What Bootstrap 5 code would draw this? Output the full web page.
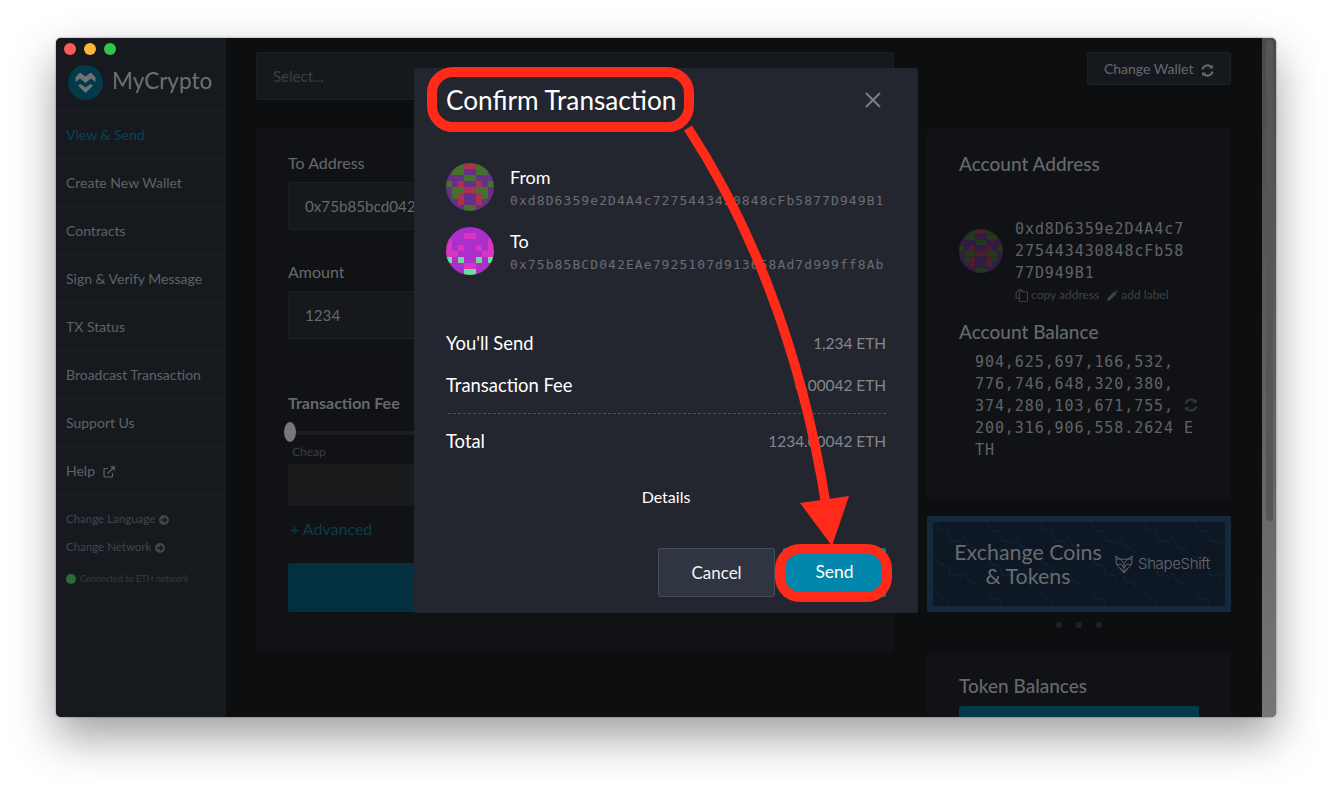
<!DOCTYPE html>
<html lang="en">
<head>
  <meta charset="UTF-8" />
  <meta name="viewport" content="width=device-width, initial-scale=1.0" />
  <title>MyCrypto - Confirm Transaction</title>
  <link href="https://cdn.jsdelivr.net/npm/bootstrap@5.3.0/dist/css/bootstrap.min.css" rel="stylesheet" />
  <style>
    html, body { height: 792px; overflow: hidden; }
    body {
      background: #fff;
      font-family: "Lato", "Liberation Sans", sans-serif;
      padding: 38px 56px 0;
      position: relative;
    }
    .identicon { border-radius: 50%; flex: none; }
    .identicon-dim { opacity: .4; }
    .app-window {
      position: relative;
      height: 679px;
      border-radius: 5px;
      box-shadow: 0 0 2px rgba(0,0,0,.5), 0 20px 45px rgba(0,0,0,.38);
    }
    .app-clip { height: 100%; border-radius: 5px; overflow: hidden; background: #0c0e10; }
    .lights { position: absolute; left: 8px; top: 5px; gap: 8px; }
    .lights span { width: 12px; height: 12px; border-radius: 50%; }
    .light-r { background: #fc5a57; } .light-y { background: #fdb53a; } .light-g { background: #2fc84a; }
    .side { width: 170px; background: #161a1f; flex: none; }
    .side-logo { height: 72px; padding: 27px 0 0 12px; gap: 9px; font-size: 22.5px; line-height: 32px; color: #6e7072; }
    .side .nav-link {
      height: 48px; line-height: 47px; padding: 0 0 0 10px; font-size: 14px; color: #5f6265;
      border-top: 1px solid #1d2128;
    }
    .side .nav-link.active-link { color: #0b4354; }
    .side-last { border-top: 1px solid #1d2128; padding: 10px 0 0 10px; font-size: 11.5px; color: #43464a; }
    .side-last div { height: 28px; line-height: 28px; }
    .side-last .net-line { font-size: 9px; height: 16px; line-height: 16px; margin-top: 10px; color: #373a3e; }
    .side-arrow { margin-left: 1px; }
    .net-dot { width: 10px; height: 10px; border-radius: 50%; background: #2a6b38; display: inline-block; margin-right: 4px; vertical-align: -2px; }
    .main-area { flex: 1; padding: 14px 31px 0 30px; gap: 33px; min-width: 0; }
    .col-left { width: 638px; flex: none; }
    .col-right { width: 304px; flex: none; }
    .top-strip { height: 48px; margin-bottom: 28px; }
    .fake-select { height: 48px; background: #15181c; border: 1px solid #1c2026; border-radius: 2px; padding: 0 16px; line-height: 46px; font-size: 15px; color: #3c3f43; }
    .wallet-btn { height: 33px; width: 144px; padding: 0; background: #15191e; border: 1px solid #1d2127; border-radius: 2px; color: #65686b; font-size: 14px; }
    .panel { background: #101216; border: 0; border-radius: 2px; color: #65686b; }
    .send-panel { height: 524px; padding: 23px 32px 0; }
    .panel-label { font-size: 16px; line-height: 24px; margin: 0; color: #66696c; }
    .panel-input { height: 48px; margin-top: 7px; background: #15181c; border: 1px solid #1c2026; border-radius: 2px; color: #66696c; font-size: 15.2px; padding: 0 16px; box-shadow: none; }
    .panel-input:disabled { background: #15181c; }
    .fee-slider { height: 20px; margin-top: 7px; position: relative; }
    .fee-slider::before { content: ""; position: absolute; left: 0; right: 0; top: 9px; height: 4px; background: #1c1e21; }
    .fee-knob { position: absolute; left: -4px; top: 0; width: 12px; height: 20px; border-radius: 50%; background: #77787a; }
    .fee-cheap { font-size: 12px; line-height: 16px; margin: 2px 0 0 4px; color: #3b3d40; }
    .fee-box { height: 42px; margin-top: 4px; background: #1a1b1d; }
    .adv-link { display: block; font-size: 16px; line-height: 24px; margin: 11px 0 0 2px; color: #0e3c4c; text-decoration: none; }
    .big-send { height: 49px; margin-top: 22px; background: #03303f; border-radius: 2px; }
    .acct-panel { height: 372px; padding: 23px 32px 0; }
    .acct-title { font-size: 19px; line-height: 26px; color: #66696c; margin: 0; }
    .mono-text { font-family: "DejaVu Sans Mono", "Liberation Mono", monospace; }
    .acct-addr { font-size: 15px; line-height: 22px; letter-spacing: .92px; color: #606366; }
    .acct-actions { font-size: 12px; line-height: 16px; color: #3f4245; margin: 3px 0 16px 56px; gap: 8px; }
    .acct-balance { font-size: 15px; line-height: 22px; letter-spacing: .92px; color: #606366; margin: 6px 0 0 16px; position: relative; }
    .bal-refresh { position: absolute; left: 209px; top: 47px; }
    .promo { height: 96px; margin-top: 16px; position: relative; background: #0e1824; border: 6px solid #15293c; border-radius: 2px; overflow: hidden; }
    .promo-waves { position: absolute; inset: 0; }
    .promo-in { position: relative; height: 100%; padding-left: 15px; }
    .promo-text { width: 160px; font-size: 21.4px; line-height: 24px; text-align: center; color: #686c71; flex: none; }
    .promo-brand { font-size: 15px; color: #666a6f; gap: 5px; margin-left: 7px; font-family: "Inter", "Lato", sans-serif; font-weight: 300; letter-spacing: -.35px; }
    .promo-dots { gap: 14px; margin-top: 10px; height: 6px; }
    .promo-dots span { width: 6px; height: 6px; border-radius: 50%; background: #1e2228; }
    .token-panel { margin-top: 24px; height: 120px; padding: 21px 32px 0; }
    .token-btn { height: 40px; margin-top: 7px; background: #033a4b; border-radius: 2px; }
    .scroll-rail { width: 14px; flex: none; background: linear-gradient(#4a4a4a, #767676); padding: 2px 3px 0 4px; }
    .scroll-thumb { height: 481px; background: #565656; border-radius: 4px; }
    .tx-dialog {
      position: absolute; left: 358px; top: 30px; width: 504px; height: 545px;
      background: #23262e; border: 0; border-radius: 2px; color: #fff; padding: 14px 32px 0;
    }
    .tx-title { font-size: 26.2px; line-height: 36px; font-weight: 400; margin: 0; color: #fff; }
    .tx-close { position: absolute; right: 37px; top: 24px; width: 16px; height: 16px; padding: 0; background: none; border: 0; line-height: 0; }
    .tx-parties { margin-top: 45px; gap: 16px; }
    .tx-who { gap: 16px; height: 48px; }
    .tx-who svg { flex: none; }
    .tx-name { font-size: 18px; line-height: 22px; padding-top: 3px; color: #fff; }
    .tx-addr { font-size: 13px; line-height: 20px; margin-top: 3px; letter-spacing: 1.09px; color: #6a6d73; white-space: nowrap; }
    .tx-row { font-size: 18.4px; line-height: 24px; }
    .tx-row .tx-val { font-size: 15.4px; color: #85878c; }
    .tx-dash { border-top: 1px dashed #4d5057; margin: 16px 0 15px 2px; }
    .tx-details { margin-top: 32px; line-height: 24px; font-size: 16px; text-align: center; color: #fff; }
    .tx-actions { margin-top: 39px; gap: 8px; }
    .tx-cancel { width: 117px; height: 49px; padding: 0; background: #2f3541; border: 1px solid #474c58; border-radius: 2px; color: #f2f2f2; font-size: 17px; }
    .tx-send { width: 103px; height: 49px; padding: 0; background: #0087ab; border: 0; border-radius: 2px; color: #fff; font-size: 17.5px; }
    .callouts { position: absolute; left: 0; top: 0; pointer-events: none; }
    .mt-30 { margin-top: 30px; } .mt-52 { margin-top: 52px; } .mt-41 { margin-top: 41px; }
    .mt-56 { margin-top: 56px; } .mt-18 { margin-top: 18px; } .gap-12 { gap: 12px; }
  </style>
</head>
<body>
  <div class="app-window">
    <div class="app-clip d-flex">
      <aside class="side">
        <div class="side-logo d-flex">
          <svg width="35" height="35" viewBox="0 0 35 35"><circle cx="17.5" cy="17.5" r="17.5" fill="#033a4a"/><path d="M7.500 12.500L12 7.500l5.500 4 5.500-4 4.500 5V17L23 13.500 17.500 18 12 13.500 7.500 17z" fill="#6f7377"/><path d="M10 20.500l2.500-1.500 5 3.500 5-3.500 2.500 1.500-7.500 7.500z" fill="#6f7377"/></svg>
          <span>MyCrypto</span>
        </div>
        <nav class="nav flex-column">
          <a class="nav-link active-link" href="#">View &amp; Send</a>
          <a class="nav-link" href="#">Create New Wallet</a>
          <a class="nav-link" href="#">Contracts</a>
          <a class="nav-link" href="#">Sign &amp; Verify Message</a>
          <a class="nav-link" href="#">TX Status</a>
          <a class="nav-link" href="#">Broadcast Transaction</a>
          <a class="nav-link" href="#">Support Us</a>
          <a class="nav-link" href="#">Help
            <svg class="ms-1" width="12" height="12" viewBox="0 0 12 12" fill="none" stroke="#5f6265" stroke-width="1.2"><path d="M9.500 7v3a1 1 0 0 1-1 1H2a1 1 0 0 1-1-1V3.500a1 1 0 0 1 1-1h3"/><path d="M4.500 7.500L11 1M7.500 .8h3.700v3.700"/></svg>
          </a>
        </nav>
        <div class="side-last">
          <div>Change Language <svg class="side-arrow" width="10" height="10" viewBox="0 0 10 10"><circle cx="5" cy="5" r="5" fill="#43464a"/><path d="M2 5h5M5 2.600L7.400 5 5 7.400" fill="none" stroke="#161a1f" stroke-width="1.4"/></svg></div>
          <div>Change Network <svg class="side-arrow" width="10" height="10" viewBox="0 0 10 10"><circle cx="5" cy="5" r="5" fill="#43464a"/><path d="M2 5h5M5 2.600L7.400 5 5 7.400" fill="none" stroke="#161a1f" stroke-width="1.4"/></svg></div>
          <div class="net-line"><span class="net-dot"></span>Connected to ETH network</div>
        </div>
      </aside>

      <main class="main-area d-flex">
        <section class="col-left">
          <div class="top-strip"><div class="fake-select">Select...</div></div>
          <div class="card panel send-panel">
            <label class="panel-label">To Address</label>
            <input class="form-control panel-input" value="0x75b85bcd042EAe7925107d913658Ad7d999ff8Ab" disabled />
            <label class="panel-label mt-30">Amount</label>
            <input class="form-control panel-input" value="1234" disabled />
            <label class="panel-label fw-bold mt-52">Transaction Fee</label>
            <div class="fee-slider"><span class="fee-knob"></span></div>
            <div class="fee-cheap">Cheap</div>
            <div class="fee-box"></div>
            <a class="adv-link" href="#">+ Advanced</a>
            <div class="big-send"></div>
          </div>
        </section>

        <section class="col-right">
          <div class="top-strip d-flex justify-content-end align-items-start">
            <button class="btn wallet-btn" type="button">Change Wallet
              <svg class="ms-1" width="13" height="13" viewBox="0 0 12 12" fill="none" stroke="#65686b" stroke-width="2"><path d="M1.400 5A4.700 4.700 0 0 1 9.600 3"/><path d="M10.600 7A4.700 4.700 0 0 1 2.400 9"/><path d="M11 .6v3.600H7.400zM1 11.400V7.800h3.600z" fill="#65686b" stroke="none"/></svg>
            </button>
          </div>
          <div class="card panel acct-panel">
            <h3 class="acct-title">Account Address</h3>
            <div class="d-flex align-items-center gap-12 mt-41">
              <svg class="identicon identicon-dim" data-grid="from" width="44" height="44" viewBox="0 0 8 8"></svg>
              <div class="mono-text acct-addr">0xd8D6359e2D4A4c7<br />275443430848cFb58<br />77D949B1</div>
            </div>
            <div class="acct-actions d-flex">
              <span><svg width="13" height="13" viewBox="0 0 12 12" fill="none" stroke="#3f4245"><rect x="4" y="2.500" width="7.500" height="9" rx="1"/><path d="M4 8.500H1V3.500L3.500 .8H6.500V2.500"/></svg> copy address</span>
              <span><svg width="11" height="11" viewBox="0 0 11 11"><path d="M0 11l.8-3L7.600 1.200l2.200 2.200L3 10.200zM8.300.5l.7-.5 2 2-.5.700z" fill="#3f4245"/></svg> add label</span>
            </div>
            <h3 class="acct-title">Account Balance</h3>
            <div class="mono-text acct-balance">904,625,697,166,532,<br />776,746,648,320,380,<br />374,280,103,671,755,<br />200,316,906,558.2624 E<br />TH
              <svg class="bal-refresh" width="14" height="14" viewBox="0 0 12 12" fill="none" stroke="#303338" stroke-width="2"><path d="M1.400 5A4.700 4.700 0 0 1 9.600 3"/><path d="M10.600 7A4.700 4.700 0 0 1 2.400 9"/><path d="M11 .6v3.600H7.400zM1 11.400V7.800h3.600z" fill="#303338" stroke="none"/></svg>
            </div>
          </div>
          <div class="promo">
            <svg class="promo-waves" width="292" height="84">
              <defs>
                <pattern id="wavy" width="52" height="34" patternUnits="userSpaceOnUse">
                  <path d="M0 0q4 1 5 5t6 4 5 6 6 4 5 5M30 17q4 1 5 5t6 4 5 6" fill="none" stroke="#122130" stroke-width="1.2"/>
                </pattern>
              </defs>
              <rect width="292" height="84" fill="url(#wavy)"/>
            </svg>
            <div class="promo-in d-flex align-items-center">
              <div class="promo-text">Exchange Coins<br />&amp; Tokens</div>
              <div class="promo-brand d-flex align-items-center">
                <svg width="18" height="19" viewBox="0 0 18 19" fill="none" stroke="#666a6f" stroke-width=".9"><path d="M.7 1l4.800 3.200h7L17.300 1l-.8 8.300L9 18 1.500 9.300z"/><path d="M.9 4l4.600.2L9 8.500l3.500-4.300 4.600-.2M1.500 9.300H6.500L9 13l2.500-3.700h5M9 8.500V18M5.500 13L9 18l3.500-5"/></svg>
                <span>ShapeShift</span>
              </div>
            </div>
          </div>
          <div class="promo-dots d-flex justify-content-center"><span></span><span></span><span></span></div>
          <div class="card panel token-panel">
            <h3 class="acct-title">Token Balances</h3>
            <div class="token-btn"></div>
          </div>
        </section>
      </main>

      <div class="scroll-rail"><div class="scroll-thumb"></div></div>
    </div>

    <div class="lights d-flex"><span class="light-r"></span><span class="light-y"></span><span class="light-g"></span></div>

    <div class="modal-content tx-dialog">
      <h2 class="tx-title">Confirm Transaction</h2>
      <button class="tx-close" type="button" aria-label="Close"><svg width="16" height="16" viewBox="0 0 16 16" stroke="#7b7e83" stroke-width="2"><path d="M1 1l14 14M15 1L1 15"/></svg></button>
      <div class="tx-parties d-flex flex-column">
        <div class="tx-who d-flex">
          <svg class="identicon" data-grid="from" width="48" height="48" viewBox="0 0 8 8"></svg>
          <div><div class="tx-name">From</div><div class="mono-text tx-addr">0xd8D6359e2D4A4c7275443430848cFb5877D949B1</div></div>
        </div>
        <div class="tx-who d-flex">
          <svg class="identicon" data-grid="to" width="48" height="48" viewBox="0 0 8 8"></svg>
          <div><div class="tx-name">To</div><div class="mono-text tx-addr">0x75b85BCD042EAe7925107d913658Ad7d999ff8Ab</div></div>
        </div>
      </div>
      <div class="tx-row d-flex justify-content-between align-items-center mt-56"><span>You'll Send</span><span class="tx-val">1,234 ETH</span></div>
      <div class="tx-row d-flex justify-content-between align-items-center mt-18"><span>Transaction Fee</span><span class="tx-val">0.00042 ETH</span></div>
      <div class="tx-dash"></div>
      <div class="tx-row d-flex justify-content-between align-items-center"><span>Total</span><span class="tx-val">1234.00042 ETH</span></div>
      <div class="tx-details">Details</div>
      <div class="tx-actions d-flex justify-content-end">
        <button class="btn tx-cancel" type="button">Cancel</button>
        <button class="btn tx-send" type="button">Send</button>
      </div>
    </div>
  </div>

  <svg class="callouts" width="1332" height="792" fill="none" stroke="#ff2a1a">
    <rect x="432" y="72" width="257" height="55" rx="21" stroke-width="10"/>
    <rect x="780" y="549" width="107" height="48" rx="20" stroke-width="10"/>
    <path d="M688 128C745 215 800 340 826 505" stroke-width="9.500"/>
    <path d="M800 503L849 496 832 546z" fill="#ff2a1a" stroke="none"/>
  </svg>

  <script>
    // identicons are 8x8 blocks, mirrored around the middle, so only the left half is listed
    const grids = {
      from: {
        colors: { p: "#653086", g: "#47702f", r: "#a8324f" },
        rows: ["gggr", "pggp", "pppg", "gprp", "pggr", "pgrp", "pprp", "pppg"]
      },
      to: {
        colors: { b: "#ad2fcb", k: "#d835c4", m: "#6fdb9a" },
        rows: ["bbbb", "bbbk", "kbbb", "kbkb", "kkbb", "mbmb", "bbbk", "bbbm"]
      }
    };

    document.querySelectorAll(".identicon").forEach(svg => {
      const grid = grids[svg.dataset.grid];
      let html = "";
      grid.rows.forEach((row, y) => {
        (row + row.split("").reverse().join("")).split("").forEach((c, x) => {
          html += `<rect x="${x}" y="${y}" width="1.02" height="1.02" fill="${grid.colors[c]}"/>`;
        });
      });
      svg.innerHTML = html;
    });
  </script>
</body>
</html>
